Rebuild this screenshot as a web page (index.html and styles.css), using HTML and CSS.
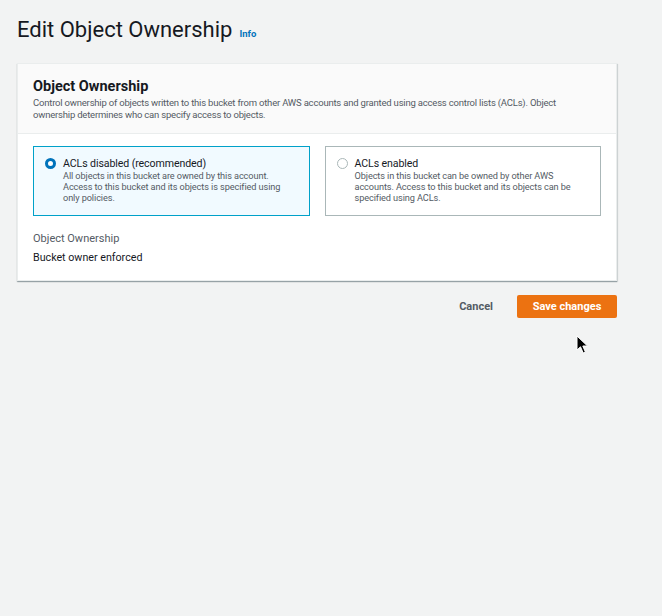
FILE: index.html
```html
<!DOCTYPE html>
<html>
<head>
<meta charset="utf-8">
<link rel="stylesheet" href="styles.css">
</head>
<body>
<div class="page">
  <div class="title-row">
    <h1 class="title">Edit Object Ownership</h1>
    <a class="info">Info</a>
  </div>
  <div class="card">
    <div class="card-header">
      <h2 class="card-title">Object Ownership</h2>
      <p class="card-desc">Control ownership of objects written to this bucket from other AWS accounts and granted using access control lists (ACLs). Object ownership determines who can specify access to objects.</p>
    </div>
    <div class="card-body">
      <div class="tiles">
        <div class="tile selected">
          <span class="radio checked"></span>
          <div class="tile-text">
            <div class="tile-label">ACLs disabled (recommended)</div>
            <div class="tile-desc">All objects in this bucket are owned by this account. Access to this bucket and its objects is specified using only policies.</div>
          </div>
        </div>
        <div class="tile">
          <span class="radio"></span>
          <div class="tile-text">
            <div class="tile-label">ACLs enabled</div>
            <div class="tile-desc">Objects in this bucket can be owned by other AWS accounts. Access to this bucket and its objects can be specified using ACLs.</div>
          </div>
        </div>
      </div>
      <div class="field">
        <div class="field-label">Object Ownership</div>
        <div class="field-value">Bucket owner enforced</div>
      </div>
    </div>
  </div>
  <div class="actions">
    <button class="btn-link">Cancel</button>
    <button class="btn-primary">Save changes</button>
  </div>
</div>
<svg class="cursor" width="14" height="20" viewBox="0 0 14 20"><path d="M1 1 L1 15 L4.5 11.8 L7.2 18 L9.4 17 L6.8 11 L11.5 11 Z" fill="#000" stroke="#fff" stroke-width="1"/></svg>
</body>
</html>
```
FILE: styles.css
```css
* { box-sizing: border-box; }
html, body { margin: 0; padding: 0; }
body {
  background: #f2f3f3;
  font-family: Roboto, "Liberation Sans", sans-serif;
  color: #16191f;
  width: 662px;
  height: 616px;
  position: relative;
  overflow: hidden;
}
.page { padding: 14px 45px 0 17px; }
.title-row { display: flex; align-items: baseline; gap: 7px; height: 33px; }
.title { margin: 0; font-size: 22px; font-weight: 400; line-height: 32px; color: #16191f; }
.info { font-size: 9.5px; font-weight: 700; color: #0073bb; }
.card {
  margin-top: 16px;
  background: #fff;
  border: 1px solid #eaeded;
  box-shadow: 0 1px 1px rgba(0, 28, 36, 0.3), 1px 1px 1px rgba(0, 28, 36, 0.1);
}
.card-header {
  background: #fafafa;
  border-bottom: 1px solid #eaeded;
  padding: 14px 15px 12px;
}
.card-title { margin: 0; font-size: 14.5px; font-weight: 700; line-height: 18px; }
.card-desc { margin: 1px 0 0; max-width: 535px; font-size: 9.5px; letter-spacing: -0.2px; line-height: 12px; color: #545b64; }
.card-body { padding: 12px 15px 15px; }
.tiles { display: grid; grid-template-columns: 1fr 1fr; gap: 15px; }
.tile {
  display: flex;
  gap: 7px;
  border: 1px solid #aab7b8;
  padding: 10px 12px 10px 11px;
  height: 70px;
}
.tile.selected { border-color: #00a1c9; background: #f1faff; }
.radio {
  flex: none;
  width: 11px; height: 11px;
  border-radius: 50%;
  border: 1px solid #aab7b8;
  background: #fff;
  margin-top: 1px;
}
.radio.checked { border: 3px solid #0073bb; }
.tile-label { font-size: 10.6px; letter-spacing: -0.1px; line-height: 13px; }
.tile-desc { font-size: 9.2px; letter-spacing: -0.1px; line-height: 11px; color: #545b64; }
.field { margin-top: 16px; }
.field-label { font-size: 11px; line-height: 14px; color: #545b64; }
.field-value { margin-top: 5px; font-size: 10.7px; line-height: 14px; }
.actions { display: flex; justify-content: flex-end; align-items: center; gap: 24px; margin-top: 14px; }
.btn-link {
  border: 0; background: transparent; font-family: inherit;
  font-size: 11px; font-weight: 700; color: #545b64; padding: 0; cursor: pointer;
}
.btn-primary {
  border: 0; border-radius: 2px; background: #ec7211; color: #fff;
  font-family: inherit; font-size: 11px; font-weight: 700;
  height: 23px; width: 100px; padding: 0;
}
.cursor { position: absolute; left: 576px; top: 335px; }
```
